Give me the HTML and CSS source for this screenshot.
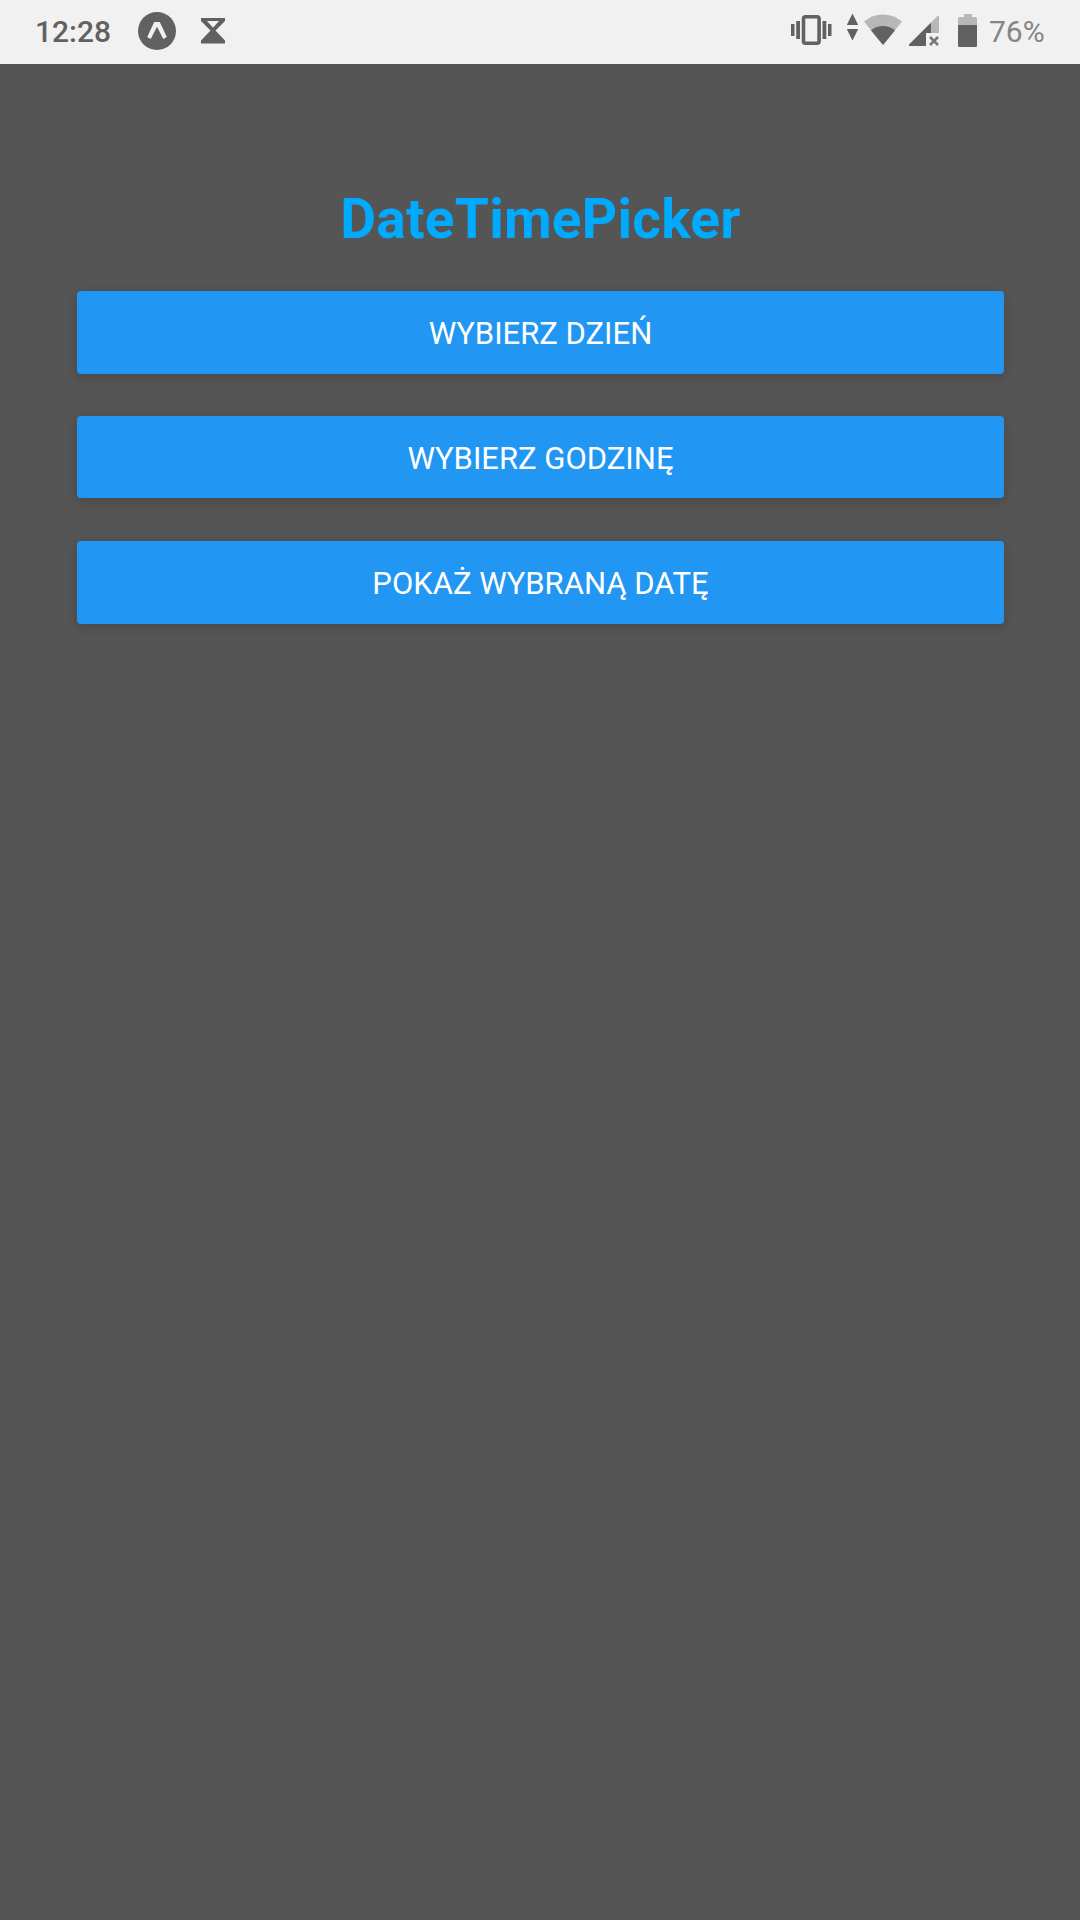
FILE: index.html
```html
<!DOCTYPE html>
<html lang="pl">
<head>
<meta charset="utf-8">
<title>DateTimePicker</title>
<link rel="stylesheet" href="styles.css">
</head>
<body>
<header class="status-bar">
  <span class="clock">12:28</span>
  <svg class="icon-expo" width="38" height="64" viewBox="0 0 38 64"><circle cx="19" cy="31" r="19" fill="#616161"/><path d="M16.2 22h5.6l7 15-3.5 2-6.3-12.3L12.7 39l-3.5-2z" fill="#f1f1f1"/></svg>
  <svg class="icon-hourglass" width="24" height="64" viewBox="0 0 24 64"><path fill="#616161" fill-rule="evenodd" d="M0 18h24v3l-9.500 9.500L24 40.500v3H0v-3l9.500-10L0 21zM6 21l6 6.700L18 21z"/></svg>
  <div class="status-right">
    <svg class="icon-vibrate" width="41" height="64" viewBox="0 0 41 64"><path fill="#616161" d="M0 24h3.500v12H0zM5.200 21H9v18H5.200zM31.500 21h3.800v18h-3.800zM37 24h3.500v12H37z"/><rect x="12.500" y="16.700" width="15.600" height="26.600" rx="2" fill="none" stroke="#616161" stroke-width="3.600"/></svg>
    <svg class="icon-data" width="12" height="64" viewBox="0 0 12 64"><path fill="#616161" d="M5.500 13.500 11.200 25H-.2zM-.2 29h11.400L5.500 40.500z"/></svg>
    <svg class="icon-wifi" width="39" height="64" viewBox="0 0 39 64"><path fill="#b7b7b7" d="M19 45 0 21.500Q8.500 14.500 19 14.500T38 21.500z"/><path fill="#616161" d="M19 45 6.900 30.300Q12.500 26 19 26T31.100 30.300z"/></svg>
    <svg class="icon-signal" width="31" height="64" viewBox="0 0 31 64"><path fill="#b7b7b7" d="M22 22.500 28.500 16q1.500-1 1.500 1v16H22z"/><path fill="#616161" d="M0 44.500 22 22.500V33h-5v13H1Q-.5 46 0 44.500z"/><path d="m21 37 8 8m0-8-8 8" stroke="#777" stroke-width="2.500"/></svg>
    <svg class="icon-battery" width="19" height="64" viewBox="0 0 19 64"><path fill="#b7b7b7" d="M6 14h8v3h3.500q1.500 0 1.500 1.500V25H0v-6.500Q0 17 1.500 17H6z"/><path fill="#616161" d="M0 25h19v20.500q0 1.500-1.500 1.500h-16Q0 47 0 45.500z"/></svg>
    <span class="battery-level">76%</span>
  </div>
</header>
<main class="screen">
  <h1 class="title">DateTimePicker</h1>
  <div class="actions">
    <button class="action" type="button">WYBIERZ DZIEŃ</button>
    <button class="action action-short" type="button">WYBIERZ GODZINĘ</button>
    <button class="action" type="button">POKAŻ WYBRANĄ DATĘ</button>
  </div>
</main>
</body>
</html>
```
FILE: styles.css
```css
* { box-sizing: border-box; }
body {
  margin: 0;
  min-height: 1920px;
  background: #555;
  font-family: Roboto, sans-serif;
}
svg { display: block; flex: none; }
.status-bar {
  display: flex;
  height: 64px;
  padding: 0 36px 0 35px;
  background: #f1f1f1;
  color: #616161;
}
.clock {
  width: 103px;
  font-size: 30px;
  font-weight: 500;
  line-height: 63px;
}
.icon-hourglass { margin-left: 25px; }
.status-right { display: flex; margin-left: auto; }
.icon-data { margin-left: 15px; }
.icon-wifi { margin-left: 5px; }
.icon-signal { margin-left: 6px; }
.icon-battery { margin-left: 18px; }
.battery-level {
  width: 55px;
  margin-left: 12px;
  color: #858585;
  font-size: 30px;
  line-height: 63px;
  white-space: nowrap;
}
.screen { padding: 118px 76px 0 77px; }
.title {
  margin: 0;
  color: #0af;
  font-size: 55px;
  font-weight: 700;
  letter-spacing: .25px;
  line-height: 74px;
  text-align: center;
}
.actions {
  display: flex;
  flex-direction: column;
  margin-top: 35px;
}
.action {
  height: 83px;
  margin: 0 0 42px;
  padding: 2px 0 0;
  border: 0;
  border-radius: 4px;
  background: #2196f3;
  box-shadow: 0 3px 12px rgba(0, 0, 0, .18);
  color: #fff;
  font-family: inherit;
  font-size: 31px;
  line-height: 81px;
  text-align: center;
}
.action-short { height: 82px; margin-bottom: 43px; }
```
